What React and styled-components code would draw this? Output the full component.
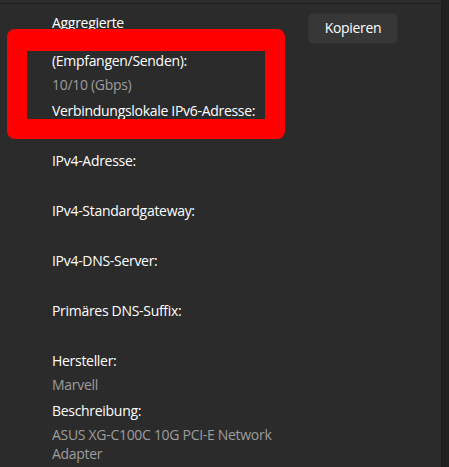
import React from "react"
import styled, { createGlobalStyle } from "styled-components"

const GlobalStyle = createGlobalStyle`
  html, body {
    margin: 0;
    padding: 0;
    background: #2b2b2b;
  }
  body {
    font-family: "Segoe UI", "Open Sans", "Noto Sans", sans-serif;
    -webkit-font-smoothing: antialiased;
  }
`

const fields = [
  { label: "Aggregierte Verbindungsgeschwindigkeit (Empfangen/Senden):", value: "10/10 (Gbps)" },
  { label: "Verbindungslokale IPv6-Adresse:", value: "" },
  { label: "IPv4-Adresse:", value: "" },
  { label: "IPv4-Standardgateway:", value: "" },
  { label: "IPv4-DNS-Server:", value: "" },
  { label: "Primäres DNS-Suffix:", value: "" },
  { label: "Hersteller:", value: "Marvell" },
  { label: "Beschreibung:", value: "ASUS XG-C100C 10G PCI-E Network Adapter" },
]

export default function App() {
  return (
    <>
      <GlobalStyle />
      <Window>
        <Main>
          <TopEdge />
          <Content>
            <InfoList>
              {fields.map((f) => (
                <Field key={f.label}>
                  <Label>{f.label}</Label>
                  <Value>{f.value}</Value>
                </Field>
              ))}
            </InfoList>
            <CopyButton>Kopieren</CopyButton>
          </Content>
          {/* red annotation drawn over the panel */}
          <Highlight />
        </Main>
        <ScrollStrip />
      </Window>
    </>
  )
}

const Window = styled.div`
  display: flex;
  width: 449px;
  height: 467px;
  overflow: hidden;
  background: #2b2b2b;
`

const Main = styled.div`
  position: relative;
  flex: 1;
  display: flex;
  flex-direction: column;
`

const TopEdge = styled.div`
  height: 3px;
  background: #2d2d2d;
  border-bottom: 1px solid #1f1f1f;
`

const Content = styled.div`
  display: grid;
  grid-template-columns: 236px auto;
  column-gap: 20px;
  align-items: start;
  padding: 9px 0 0 52px;
`

const InfoList = styled.div`
  display: flex;
  flex-direction: column;
  gap: 7px;
`

const Field = styled.div`
  display: flex;
  flex-direction: column;
  gap: 5px;
`

const Label = styled.div`
  font-size: 14px;
  line-height: 19px;
  letter-spacing: -0.3px;
  color: #ffffff;
`

const Value = styled.div`
  font-size: 14px;
  line-height: 19px;
  min-height: 19px;
  letter-spacing: -0.3px;
  color: #9d9d9d;
`

const CopyButton = styled.button`
  width: 90px;
  height: 31px;
  justify-self: start;
  border: 1px solid #303030;
  border-radius: 4px;
  background: #373737;
  color: #ffffff;
  font-family: inherit;
  font-size: 14px;
  letter-spacing: -0.3px;
  padding: 0 0 2px;
`

const Highlight = styled.div`
  position: absolute;
  left: 7px;
  top: 29px;
  width: 278px;
  height: 110px;
  box-sizing: border-box;
  border: 20px solid #ff0000;
  border-top-width: 22px;
  border-radius: 8px;
  pointer-events: none;
`

const ScrollStrip = styled.div`
  width: 7px;
  background: #202020;
  border-left: 1px solid #1c1c1c;
`
